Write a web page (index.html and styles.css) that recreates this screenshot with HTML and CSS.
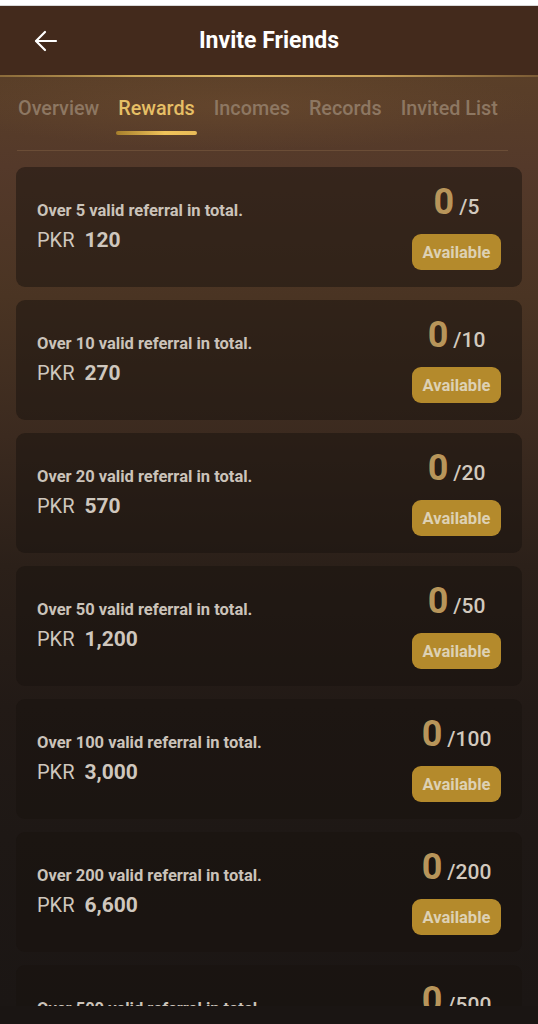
FILE: index.html
```html
<!DOCTYPE html>
<html lang="en">
<head>
<meta charset="utf-8">
<title>Invite Friends</title>
<link rel="stylesheet" href="styles.css">
</head>
<body>
<div class="statusbar"></div>
<div class="page">
  <header class="topbar">
    <button class="back" aria-label="Back">
      <svg width="24" height="22" viewBox="0 0 24 22" fill="none" stroke="#ffffff" stroke-width="2.2" stroke-linecap="round" stroke-linejoin="round"><path d="M22 11H2.5"/><path d="M11 2L2 11l9 9"/></svg>
    </button>
    <h1 class="title">Invite Friends</h1>
  </header>
  <div class="goldline"></div>
  <nav class="tabs">
    <div class="tab">Overview</div>
    <div class="tab active">Rewards</div>
    <div class="tab">Incomes</div>
    <div class="tab">Records</div>
    <div class="tab">Invited List</div>
  </nav>
  <div class="divider"></div>
  <main class="list">
    <div class="card">
      <div class="info"><div class="cond">Over 5 valid referral in total.</div><div class="amount"><span class="cur">PKR</span><span class="num">120</span></div></div>
      <div class="side"><div class="progress"><span class="done">0</span><span class="goal">/5</span></div><button class="btn">Available</button></div>
    </div>
    <div class="card">
      <div class="info"><div class="cond">Over 10 valid referral in total.</div><div class="amount"><span class="cur">PKR</span><span class="num">270</span></div></div>
      <div class="side"><div class="progress"><span class="done">0</span><span class="goal">/10</span></div><button class="btn">Available</button></div>
    </div>
    <div class="card">
      <div class="info"><div class="cond">Over 20 valid referral in total.</div><div class="amount"><span class="cur">PKR</span><span class="num">570</span></div></div>
      <div class="side"><div class="progress"><span class="done">0</span><span class="goal">/20</span></div><button class="btn">Available</button></div>
    </div>
    <div class="card">
      <div class="info"><div class="cond">Over 50 valid referral in total.</div><div class="amount"><span class="cur">PKR</span><span class="num">1,200</span></div></div>
      <div class="side"><div class="progress"><span class="done">0</span><span class="goal">/50</span></div><button class="btn">Available</button></div>
    </div>
    <div class="card">
      <div class="info"><div class="cond">Over 100 valid referral in total.</div><div class="amount"><span class="cur">PKR</span><span class="num">3,000</span></div></div>
      <div class="side"><div class="progress"><span class="done">0</span><span class="goal">/100</span></div><button class="btn">Available</button></div>
    </div>
    <div class="card">
      <div class="info"><div class="cond">Over 200 valid referral in total.</div><div class="amount"><span class="cur">PKR</span><span class="num">6,600</span></div></div>
      <div class="side"><div class="progress"><span class="done">0</span><span class="goal">/200</span></div><button class="btn">Available</button></div>
    </div>
    <div class="card">
      <div class="info"><div class="cond">Over 500 valid referral in total.</div><div class="amount"><span class="cur">PKR</span><span class="num">16,800</span></div></div>
      <div class="side"><div class="progress"><span class="done">0</span><span class="goal">/500</span></div><button class="btn">Available</button></div>
    </div>
  </main>
</div>
<div class="bottombar"></div>
</body>
</html>
```
FILE: styles.css
```css
* { box-sizing: border-box; }
html, body { margin: 0; padding: 0; }
body {
  font-family: Roboto, "Liberation Sans", Arial, sans-serif;
  background: #1a1513;
  overflow: hidden;
  height: 1024px;
}
.statusbar {
  height: 6px;
  background: #ffffff;
  border-bottom: 1px solid #d8d8d8;
}
.page {
  background: linear-gradient(180deg,
    #5a3f28 70px,
    #54392a 160px,
    #4a3423 290px,
    #3b2a1f 430px,
    #2b2019 560px,
    #221a16 700px,
    #1e1815 830px,
    #1b1614 1000px);
  min-height: 1018px;
}
.topbar {
  height: 69px;
  background: #432a1c;
  display: flex;
  align-items: center;
  justify-content: center;
  position: relative;
}
.back {
  position: absolute;
  left: 34px;
  top: 24px;
  background: none;
  border: 0;
  padding: 0;
  width: 24px;
  height: 22px;
}
.title {
  margin: 0;
  color: #ffffff;
  font-size: 23px;
  font-weight: 700;
}
.goldline {
  height: 2px;
  background: linear-gradient(90deg, #8a6a3a 0%, #c9a558 25%, #dcb868 45%, #c9a25a 70%, #7a5a34 100%);
}
.tabs {
  display: flex;
  gap: 19px;
  padding: 21px 0 0 18px;
  height: 73px;
  white-space: nowrap;
  background: radial-gradient(ellipse at 45% 40%, rgba(120,84,50,0.35), rgba(0,0,0,0) 70%);
}
.tab {
  font-size: 19.8px;
  font-weight: 500;
  color: #8d7762;
  line-height: 22px;
  display: flex;
  flex-direction: column;
}
.tab.active {
  color: #e6bf66;
}
.tab.active::after {
  content: "";
  display: block;
  height: 4px;
  margin: 11px -2px 0;
  border-radius: 2px;
  background: linear-gradient(90deg, #a77f2c, #f0c35a 60%, #e8bb58);
}
.divider {
  height: 1px;
  margin: 0 30px 0 17px;
  background: rgba(150,115,80,0.35);
}
.list {
  display: flex;
  flex-direction: column;
  gap: 13px;
  padding: 16px 16px 0;
}
.card {
  height: 120px;
  flex-shrink: 0;
  border-radius: 9px;
  background: rgba(24,17,13,0.5);
  display: flex;
  align-items: center;
  justify-content: space-between;
  padding: 0 21px;
}
.info {
  display: flex;
  flex-direction: column;
  gap: 7px;
  padding-bottom: 2px;
}
.cond {
  font-size: 16.5px;
  font-weight: 700;
  color: #cbc3ba;
  line-height: 20px;
}
.amount {
  font-size: 20px;
  line-height: 24px;
  color: #cfc7be;
  display: flex;
  gap: 10px;
}
.cur { font-weight: 400; }
.num { font-weight: 700; font-size: 21px; }
.side {
  display: flex;
  flex-direction: column;
  align-items: center;
  gap: 14px;
}
.progress {
  display: flex;
  align-items: baseline;
  height: 36px;
  white-space: nowrap;
}
.done {
  font-size: 36px;
  line-height: 36px;
  font-weight: 700;
  color: #b8955a;
}
.goal {
  font-size: 21px;
  line-height: 21px;
  font-weight: 500;
  color: #d2c9be;
  margin-left: 5px;
}
.btn {
  font-family: inherit;
  width: 89px;
  height: 36px;
  border: 0;
  border-radius: 9px;
  background: #b48a2c;
  color: #ddd1b4;
  font-size: 16.5px;
  font-weight: 700;
  padding: 0;
}
.bottombar {
  position: fixed;
  left: 0;
  right: 0;
  bottom: 0;
  height: 18px;
  background: #1a1513;
}
```
